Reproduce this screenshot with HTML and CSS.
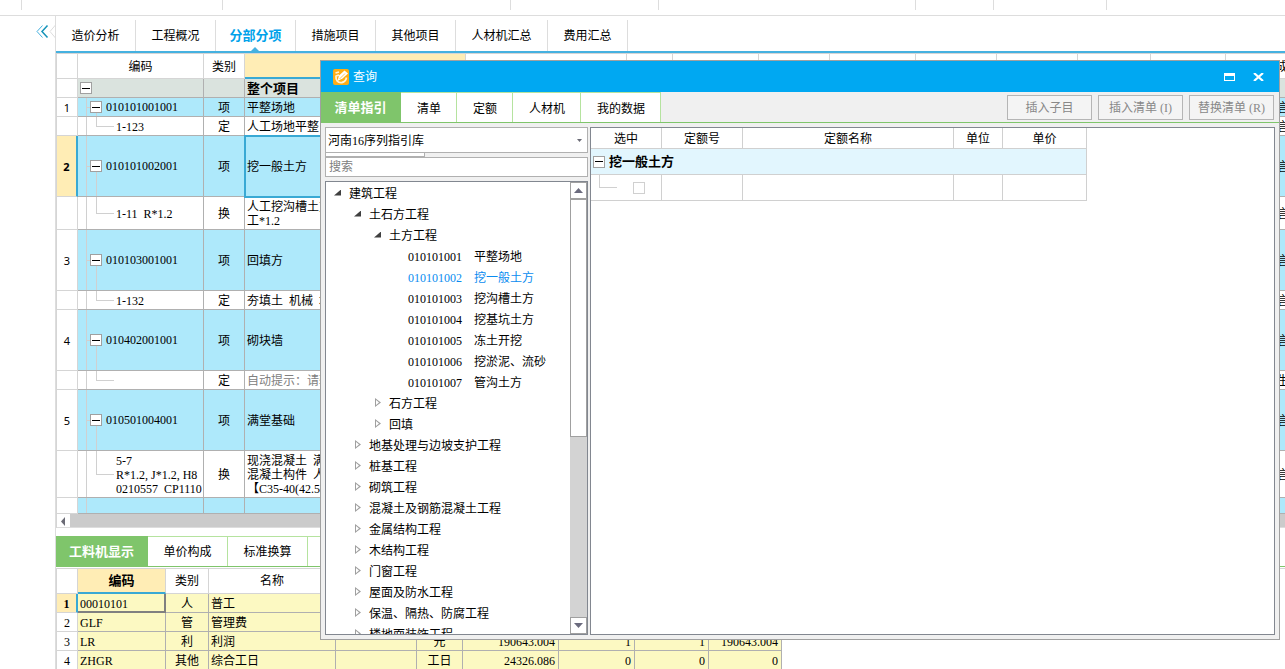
FILE: index.html
```
<!DOCTYPE html>
<html lang="zh-CN">
<head>
<meta charset="utf-8">
<title>分部分项 - 查询</title>
<link rel="stylesheet" href="styles.css">
</head>
<body>
<div class="app">
  <div class="ribbon"><i class="r1"></i><i class="r2"></i><i class="r3"></i><i class="r4"></i><i class="r5"></i><i class="r6"></i><i class="r7"></i></div>
  <div class="workspace">
    <aside class="gutter">
      <button class="collapse" aria-label="收起">
        <svg width="20" height="16" viewBox="0 0 20 16" fill="none"><path d="M6.500 1.500L1 7.500L6.500 13.500" stroke="#45b1e0"/><path d="M11.500 1.500L6 7.500L11.500 13.500" stroke="#1593b8" stroke-width="1.500"/><path d="M19.500 1L14 7.500L19.500 14" stroke="#ddd"/></svg>
      </button>
    </aside>
    <main class="main">
      <nav class="tabs">
        <button>造价分析</button><button>工程概况</button><button class="on">分部分项</button><button>措施项目</button><button>其他项目</button><button class="wide">人材机汇总</button><button>费用汇总</button>
      </nav>
      <div class="sheet">
        <table class="grid items">
          <colgroup><col class="w21"><col class="w126"><col class="w41"><col class="w221"><col class="w161"><col class="w46"><col class="w86"><col class="w71"><col class="w86"><col class="w81"><col class="w81"><col class="w73"><col class="w75"><col class="w101"></colgroup>
          <thead><tr><th></th><th>编码</th><th>类别</th><th class="picked">名称</th><th></th><th></th><th></th><th></th><th></th><th></th><th></th><th></th><th></th><th>单价构成文件</th></tr></thead>
          <tbody>
            <tr class="h19 root"><td></td><td class="top"><button class="box" aria-label="折叠"></button></td><td></td><td class="name">整个项目</td><td colspan="9"></td><td></td></tr>
            <tr class="h19 item"><td>1</td><td class="parent"><div><button class="box" aria-label="折叠"></button>010101001001</div></td><td>项</td><td class="name">平整场地</td><td colspan="9"></td><td class="file">言</td></tr>
            <tr class="h19"><td></td><td class="child">1-123</td><td>定</td><td class="name">人工场地平整</td><td colspan="9"></td><td class="file">言</td></tr>
            <tr class="h61 item current"><td>2</td><td class="parent"><div><button class="box" aria-label="折叠"></button>010101002001</div></td><td>项</td><td class="name">挖一般土方</td><td colspan="9"></td><td class="file">言</td></tr>
            <tr class="h33"><td></td><td class="child">1-11  R*1.2</td><td>换</td><td class="name">人工挖沟槽土方 一、二类土 人
工*1.2</td><td colspan="9"></td><td class="file">言</td></tr>
            <tr class="h61 item"><td>3</td><td class="parent"><div><button class="box" aria-label="折叠"></button>010103001001</div></td><td>项</td><td class="name">回填方</td><td colspan="9"></td><td class="file">言</td></tr>
            <tr class="h19"><td></td><td class="child">1-132</td><td>定</td><td class="name">夯填土  机械  地坪</td><td colspan="9"></td><td class="file">言</td></tr>
            <tr class="h61 item"><td>4</td><td class="parent"><div><button class="box" aria-label="折叠"></button>010402001001</div></td><td>项</td><td class="name">砌块墙</td><td colspan="9"></td><td class="file">言</td></tr>
            <tr class="h19"><td></td><td class="child"></td><td>定</td><td class="name hint">自动提示：请输入子目简称</td><td colspan="9"></td><td class="file">生</td></tr>
            <tr class="h61 item"><td>5</td><td class="parent"><div><button class="box" aria-label="折叠"></button>010501004001</div></td><td>项</td><td class="name">满堂基础</td><td colspan="9"></td><td class="file">言</td></tr>
            <tr class="h47"><td></td><td class="child">5-7
R*1.2, J*1.2, H8
0210557  CP1110</td><td>换</td><td class="name">现浇混凝土  满堂基础
混凝土构件  人工*1.2
【C35-40(42.5水泥)】</td><td colspan="9"></td><td class="file">言</td></tr>
            <tr class="h16 item"><td></td><td class="stem"></td><td></td><td></td><td colspan="9"></td><td></td></tr>
          </tbody>
        </table>
        <div class="hscroll"><button aria-label="向左"><svg width="12" height="12" viewBox="0 0 12 12"><path d="M8 2V11L4 6.500Z" fill="#6b6b76"/></svg></button></div>
      </div>
      <nav class="subtabs">
        <button class="on">工料机显示</button><button>单价构成</button><button>标准换算</button><button>换算信息</button>
      </nav>
      <div class="sheet">
        <table class="grid parts">
          <colgroup><col class="w21"><col class="w88"><col class="w43"><col class="w127"><col class="w81"><col class="w46"><col class="w96"><col class="w76"><col class="w74"><col class="w73"></colgroup>
          <thead><tr><th></th><th class="picked">编码</th><th>类别</th><th>名称</th><th></th><th></th><th></th><th></th><th></th><th></th></tr></thead>
          <tbody>
            <tr class="current"><td>1</td><td class="name focus">00010101</td><td>人</td><td class="name">普工</td><td></td><td></td><td></td><td></td><td></td><td></td></tr>
            <tr><td>2</td><td class="name">GLF</td><td>管</td><td class="name">管理费</td><td></td><td></td><td></td><td></td><td></td><td></td></tr>
            <tr><td>3</td><td class="name">LR</td><td>利</td><td class="name">利润</td><td></td><td>元</td><td class="num">190643.004</td><td class="num">1</td><td class="num">1</td><td class="num">190643.004</td></tr>
            <tr><td>4</td><td class="name">ZHGR</td><td>其他</td><td class="name">综合工日</td><td></td><td>工日</td><td class="num">24326.086</td><td class="num">0</td><td class="num">0</td><td class="num">0</td></tr>
          </tbody>
        </table>
      </div>
    </main>
  </div>

  <section class="dialog" role="dialog" aria-labelledby="dlg-title">
    <header class="titlebar">
      <svg width="16" height="16" viewBox="0 0 16 16"><rect width="16" height="16" rx="2" fill="#ffad14"/><path d="M2.500 4L6 3M3 7L6 6M3 6.500C2.500 12 5 14 9 13.500C11.500 13 13 11 13.500 8.500" fill="none" stroke="#fff3d6" stroke-width="1.800"/><path d="M4.500 12L6 6.500L11.500 1.500L15 4.500L9.500 9.500Z" fill="#fff"/><path d="M6.500 10L12 4.500" stroke="#ffc55a"/></svg>
      <h1 id="dlg-title">查询</h1>
      <button aria-label="最大化"><svg width="11" height="8" viewBox="0 0 11 8"><path d="M0 0H11V8H0ZM1 3V7H10V3Z" fill="#fff" fill-rule="evenodd"/></svg></button>
      <button aria-label="关闭"><svg width="11" height="8" viewBox="0 0 11 8"><path d="M1 0L10 8M10 0L1 8" stroke="#fff" stroke-width="2.200"/></svg></button>
    </header>
    <div class="toolbar">
      <nav class="dtabs"><button class="on">清单指引</button><button>清单</button><button>定额</button><button>人材机</button><button>我的数据</button></nav>
      <div class="actions"><button>插入子目</button><button>插入清单 (I)</button><button>替换清单 (R)</button></div>
    </div>
    <div class="content">
      <div class="side">
        <div class="lib"><select aria-label="指引库"><option>河南16序列指引库</option></select><svg width="5" height="3" viewBox="0 0 5 3"><path d="M0 0H5L2.500 3Z" fill="#6b6b76"/></svg></div>
        <div class="strip"></div>
        <input class="search" type="text" placeholder="搜索" aria-label="搜索">
        <div class="treebox">
          <ul class="tree">
            <li class="open">建筑工程</li>
            <li class="open l2">土石方工程</li>
            <li class="open l3">土方工程</li>
            <li class="leaf"><span>010101001</span>平整场地</li>
            <li class="leaf sel"><span>010101002</span>挖一般土方</li>
            <li class="leaf"><span>010101003</span>挖沟槽土方</li>
            <li class="leaf"><span>010101004</span>挖基坑土方</li>
            <li class="leaf"><span>010101005</span>冻土开挖</li>
            <li class="leaf"><span>010101006</span>挖淤泥、流砂</li>
            <li class="leaf"><span>010101007</span>管沟土方</li>
            <li class="shut l3">石方工程</li>
            <li class="shut l3">回填</li>
            <li class="shut l2">地基处理与边坡支护工程</li>
            <li class="shut l2">桩基工程</li>
            <li class="shut l2">砌筑工程</li>
            <li class="shut l2">混凝土及钢筋混凝土工程</li>
            <li class="shut l2">金属结构工程</li>
            <li class="shut l2">木结构工程</li>
            <li class="shut l2">门窗工程</li>
            <li class="shut l2">屋面及防水工程</li>
            <li class="shut l2">保温、隔热、防腐工程</li>
            <li class="shut l2">楼地面装饰工程</li>
          </ul>
          <div class="vscroll">
            <button aria-label="向上"><svg width="9" height="5" viewBox="0 0 9 5"><path d="M0 5L4.500 0L9 5Z" fill="#6b6b7e"/></svg></button>
            <div class="thumb"></div>
            <button class="down" aria-label="向下"><svg width="9" height="5" viewBox="0 0 9 5"><path d="M0 0L4.500 5L9 0Z" fill="#6b6b7e"/></svg></button>
          </div>
        </div>
      </div>
      <div class="result">
        <table class="quota">
          <colgroup><col class="w71"><col class="w81"><col class="w211"><col class="w49"><col class="w84"></colgroup>
          <thead><tr><th>选中</th><th>定额号</th><th>定额名称</th><th>单位</th><th>单价</th></tr></thead>
          <tbody>
            <tr class="group"><td colspan="5"><div><button class="box" aria-label="折叠"></button>挖一般土方</div></td></tr>
            <tr><td class="pick"><input type="checkbox" aria-label="选中"></td><td></td><td></td><td></td><td></td></tr>
          </tbody>
        </table>
      </div>
    </div>
  </section>
</div>
</body>
</html>
```
FILE: styles.css
```
* { box-sizing: border-box; }
body {
  margin: 0;
  background: #fff;
  color: #000;
  font: 12px/14px "Liberation Serif", "Noto Sans CJK SC", serif;
}
button, input, select { font: inherit; color: inherit; margin: 0; }
button { padding: 0; border: 0; background: none; }
svg { display: block; flex: none; }
table { border-spacing: 0; table-layout: fixed; }
th, td { padding: 0; overflow: hidden; font-weight: normal; text-align: center; }

.app { position: relative; height: 100vh; overflow: hidden; }
.ribbon { display: flex; height: 16px; border-bottom: 1px solid #ddd; }
.ribbon i { height: 10px; flex: none; border-right: 1px solid #ddd; }
.r1 { width: 22px; } .r2 { width: 201px; } .r3 { width: 288px; } .r4 { width: 148px; }
.r5 { width: 257px; } .r6 { width: 78px; } .r7 { width: 113px; }

.workspace { display: flex; min-height: calc(100vh - 16px); }
.gutter { width: 55px; flex: none; padding-top: 8px; }
.collapse { display: block; margin-left: 36px; }
.main { flex: 1; min-width: 0; border-left: 1px solid #ddd; padding-top: 4px; }

.tabs { display: flex; height: 33px; border-bottom: 2px solid #45b1e0; }
.tabs button { position: relative; width: 80px; border-right: 1px solid #ddd; }
.tabs .wide { width: 92px; }
.tabs .on, .dtabs .on, .subtabs .on { font-size: 13px; font-weight: bold; }
.tabs .on { color: #00a2ea; }
.tabs .on::after {
  content: ""; position: absolute; left: 35px; bottom: 0;
  border: 4px solid transparent; border-top: 0; border-bottom-color: #45b1e0;
}

.sheet { overflow: hidden; border-top: 1px solid #d5d5d5; border-left: 1px solid #d5d5d5; }
.grid td { border-right: 1px solid #b0b0b0; border-bottom: 1px solid #b0b0b0; white-space: pre; }
.grid th { border-right: 1px solid #d5d5d5; border-bottom: 1px solid #d5d5d5; height: 25px; }
.grid td:first-child { border-color: #d5d5d5; background: #fff; }
.items { width: 1270px; }
.items th, .items td { padding-top: 2px; }
.items td:first-child { font: 11px/14px "Noto Sans", sans-serif; }
.items .top, .items .parent { padding-top: 0; }
.grid .name { text-align: left; padding-left: 2px; }
.grid th.picked { background: #ffedb5; border-bottom: 2px solid #39a9d4; }
.items th.picked { padding-top: 4px; }
.parts th.picked { font-size: 13px; font-weight: bold; }
.grid .current td:first-child { background: #ffedb5; font-weight: bold; border-right: 2px solid #39a9d4; }
.items .current .name { outline: 2px solid #39a9d4; outline-offset: -1px; }
.items .hint { color: #808080; }
.items .file { text-align: left; padding-left: 51px; }
.root td { background: #dae3de; }
.root .name { font-size: 13px; font-weight: bold; }
.item td { background-color: #aee9fb; }
.h16 { height: 16px; } .h19 { height: 19px; } .h33 { height: 33px; } .h47 { height: 47px; } .h61 { height: 61px; }

.box {
  width: 12px; height: 12px; flex: none; display: block;
  border: 1px solid #a0a0a0;
  background: linear-gradient(#000, #000) center / 8px 1px no-repeat #fff;
}
.top .box { margin-left: 2px; }
.grid .parent, .grid .child, .grid .stem {
  --line: linear-gradient(#d0d0d0, #d0d0d0);
  text-align: left;
  background-repeat: no-repeat;
}
.grid .parent {
  background-image: var(--line), var(--line), var(--line);
  background-size: 1px 100%, 4px 1px, 1px 50%;
  background-position: 8px 0, 8px 50%, 18px 100%;
}
.parent div { display: flex; align-items: center; gap: 4px; padding-left: 12px; }
.grid .child {
  padding-left: 38px;
  background-image: var(--line), var(--line), var(--line);
  background-size: 1px 100%, 18px 1px, 1px 50%;
  background-position: 8px 0, 18px 50%, 18px 0;
}
.grid .stem { background-image: var(--line); background-size: 1px 100%; background-position: 8px 0; }

.hscroll { height: 14px; background: #cbcbcb; border-bottom: 1px solid #ddd; }
.hscroll button { width: 13px; height: 13px; background: #fff; }

.subtabs { display: flex; height: 31px; margin: 8px 0 1px; border-bottom: 1px solid #7fc56b; }
.subtabs button { width: 80px; padding-top: 1px; border-top: 1px solid #b5e39f; border-right: 1px solid #b5e39f; }
.subtabs .on { width: 92px; }
.subtabs .on, .dtabs .on { background: #7fc56b; color: #fff; border-color: #7fc56b; }

.parts { width: 725px; }
.parts td { height: 19px; padding-top: 2px; background: #fcf9c2; }
.grid .num { text-align: right; padding-right: 3px; }
.parts .focus { border-right: 2px solid #808080; border-bottom: 2px solid #808080; }

.dialog {
  position: absolute; left: 320px; right: 5px; top: 60px; bottom: 29px;
  display: flex; flex-direction: column;
  background: #f0f0f0; border: 1px solid #a0a0a0;
}
.titlebar { display: flex; align-items: center; flex: none; height: 31px; padding: 0 15px 0 12px; gap: 4px; background: #00a8f2; color: #fff; }
.titlebar h1 { flex: 1; margin: 0; font-size: 12px; font-weight: normal; }
.titlebar button + button { margin-left: 14px; }
.toolbar { display: flex; justify-content: space-between; flex: none; height: 31px; border-bottom: 1px solid #7fc56b; }
.dtabs { display: flex; }
.dtabs button { padding: 2px 15px 0 16px; background: #fff; border-top: 1px solid #b5e39f; border-right: 1px solid #b5e39f; }
.dtabs .on { width: 80px; padding: 0; }
.actions { display: flex; gap: 6px; padding: 3px 5px 2px 0; }
.actions button { width: 85px; padding-top: 1px; border: 1px solid #b5b5b5; background: #f4f4f4; color: #888; }

.content { flex: 1; min-height: 0; display: flex; gap: 2px; padding: 4px; }
.side { display: flex; flex-direction: column; width: 263px; flex: none; }
.lib { display: flex; align-items: center; flex: none; height: 26px; padding-right: 5px; border: 1px solid #b0b0b0; background: #fff; }
.lib select { flex: 1; appearance: none; border: 0; padding: 1px 0 0 2px; background: none; outline: 0; }
.strip { width: 100px; height: 4px; flex: none; background: #fff; border: 1px solid #b0b0b0; border-top: 0; }
.search { height: 20px; flex: none; padding: 1px 3px 0; border: 1px solid #b0b0b0; background: #fff; outline: 0; }
.search::placeholder { color: #808080; opacity: 1; }
.treebox { flex: 1; min-height: 0; display: flex; margin-top: 4px; border: 1px solid #828790; background: #fff; overflow: hidden; }
.tree { flex: 1; margin: 0; padding: 1px 0 0; list-style: none; white-space: nowrap; }
.tree li { display: flex; align-items: center; height: 21px; padding-left: 8px; }
.tree .l2 { padding-left: 28px; }
.tree .l3 { padding-left: 48px; }
.tree .leaf { padding-left: 82px; gap: 12px; }
.tree .open::before { content: ""; width: 7px; height: 6px; margin: 0 8px 2px 0; background: #404040; clip-path: polygon(100% 0, 100% 100%, 0 100%); }
.tree .shut::before {
  content: ""; width: 6px; height: 9px; margin: 0 8px 2px 1px;
  background: #a0a0a0;
  clip-path: polygon(evenodd, 0 0, 100% 50%, 0 100%, 0 0, 1px 2px, 1px 7px, 4px 50%, 1px 2px);
}
.tree .sel { color: #0a8cf0; }
.vscroll { width: 17px; display: flex; flex-direction: column; background: #d3d3d3; }
.vscroll button { display: flex; align-items: center; justify-content: center; height: 17px; flex: none; border: 1px solid #a0a0a0; background: #fff; }
.vscroll .thumb { height: 238px; flex: none; border: 1px solid #a0a0a0; background: #fff; }
.vscroll .down { margin-top: auto; }

.result { flex: 1; min-width: 0; border: 1px solid #828790; background: #fff; }
.quota { width: 496px; }
.quota th, .quota td { border-right: 1px solid #d0d0d0; border-bottom: 1px solid #d0d0d0; height: 26px; }
.quota th { height: 21px; padding-top: 2px; }
.quota .group td { background: #e2f6fe; font-size: 13px; font-weight: bold; }
.group div { display: flex; align-items: center; gap: 4px; padding-left: 2px; }
.quota .pick {
  --line: linear-gradient(#d0d0d0, #d0d0d0);
  background: var(--line) 8px 0 / 1px 50% no-repeat, var(--line) 8px 50% / 18px 1px no-repeat;
  text-align: left; padding-left: 42px;
}
.pick input { display: block; appearance: none; width: 12px; height: 12px; border: 1px solid #d0d0d0; background: #fff; }

.w21 { width: 21px; } .w41 { width: 41px; } .w43 { width: 43px; } .w46 { width: 46px; } .w49 { width: 49px; }
.w71 { width: 71px; } .w73 { width: 73px; } .w74 { width: 74px; } .w75 { width: 75px; } .w76 { width: 76px; }
.w81 { width: 81px; } .w84 { width: 84px; } .w86 { width: 86px; } .w88 { width: 88px; } .w96 { width: 96px; }
.w101 { width: 101px; } .w126 { width: 126px; } .w127 { width: 127px; } .w161 { width: 161px; } .w211 { width: 211px; } .w221 { width: 221px; }
```
